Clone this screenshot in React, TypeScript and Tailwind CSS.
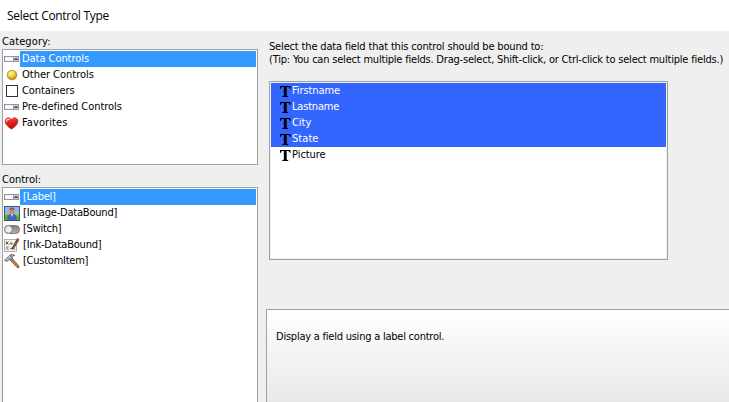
import type { ReactNode } from 'react';

const ui = "font-['DejaVu_Sans_Condensed','DejaVu_Sans',sans-serif] text-[11px] whitespace-nowrap";

function FieldIcon() {
  return (
    <svg width="16" height="16" viewBox="0 0 16 16" shapeRendering="crispEdges">
      <rect x="0" y="5" width="15" height="6" fill="#9493a2" />
      <rect x="1" y="6" width="8" height="4" fill="#f6f6fb" />
      <rect x="10" y="6" width="4" height="4" fill="#d2ccd8" />
      <path d="M11 7h2v1h1v1h-4v-1h1z" fill="#5a586a" />
    </svg>
  );
}

function BallIcon() {
  return (
    <svg width="16" height="16" viewBox="0 0 16 16">
      <defs>
        <radialGradient id="ball" cx="40%" cy="30%" r="70%">
          <stop offset="0" stopColor="#fff6a8" />
          <stop offset=".5" stopColor="#f2d143" />
          <stop offset="1" stopColor="#bd8c08" />
        </radialGradient>
      </defs>
      <circle cx="8" cy="8" r="4.800" fill="url(#ball)" stroke="#a98222" strokeWidth=".8" />
    </svg>
  );
}

function BoxIcon() {
  return (
    <svg width="16" height="16" viewBox="0 0 16 16">
      <rect x="2.5" y="2.5" width="11" height="11" fill="#fff" stroke="#333" />
    </svg>
  );
}

function HeartIcon() {
  return (
    <svg width="16" height="16" viewBox="0 0 16 16">
      <defs>
        <linearGradient id="heart" x1="0" y1="0" x2=".3" y2="1">
          <stop offset="0" stopColor="#f77b6c" />
          <stop offset=".4" stopColor="#e42a24" />
          <stop offset="1" stopColor="#b80c0c" />
        </linearGradient>
      </defs>
      <path d="M7.500 14.200C4 11.700 1.100 9.300 1.100 6.200c0-3.800 4.800-4.600 6.400-1.600 1.600-3 6.400-2.200 6.400 1.600 0 3.100-2.900 5.500-6.400 8z" fill="url(#heart)" stroke="#b5221d" strokeWidth=".6" />
      <path d="M2.700 6c.1-1.500 1.300-2 2.600-1.600" fill="none" stroke="#ffc9bd" strokeWidth="1.200" strokeLinecap="round" />
    </svg>
  );
}

function PersonIcon() {
  return (
    <svg width="16" height="16" viewBox="0 0 16 16">
      <rect x=".5" y="1.500" width="15" height="14" fill="#8fb6ee" stroke="#44546c" />
      <path d="M1 9.500h14V15H1z" fill="#57b02c" />
      <path d="M1 8l2-1.500L5 10H1zM11 7l4 1v2.500h-4z" fill="#8fcb86" />
      <path d="M3.200 15c0-4.500 1.800-6.200 4.800-6.200s4.800 1.700 4.800 6.200z" fill="#3f69b8" />
      <path d="M6.800 8.800h2.400L8 12z" fill="#e6ecf8" />
      <ellipse cx="8" cy="5.900" rx="2.500" ry="3" fill="#c98b6c" />
      <path d="M5.400 5.400c0-3.800 5.200-3.800 5.200 0L9.500 4.600h-3z" fill="#8d5238" />
    </svg>
  );
}

function SwitchIcon() {
  return (
    <svg width="16" height="16" viewBox="0 0 16 16">
      <defs>
        <linearGradient id="track" x1="0" y1="0" x2="0" y2="1">
          <stop offset="0" stopColor="#7e7e80" />
          <stop offset="1" stopColor="#b4b4b8" />
        </linearGradient>
      </defs>
      <rect x=".5" y="4.500" width="15" height="8" rx="4" fill="url(#track)" stroke="#7a7a7e" />
      <circle cx="4.500" cy="8.500" r="3.800" fill="#ececee" stroke="#858589" strokeWidth=".9" />
    </svg>
  );
}

function InkIcon() {
  return (
    <svg width="16" height="16" viewBox="0 0 16 16">
      <rect x=".5" y="2.500" width="12" height="12" fill="#f3f2ec" stroke="#b2afa6" />
      <path d="M2.500 7.500v-3m0 2 2-2M3 6l1.500 1.500M5.500 7c1-2 2-1 1.500.3M8 5.500v2M4.500 10c-2-.8-3 2.500 0 2.500M6 12c1-2 1.500.5 2.500-1M9.500 12h1.500" fill="none" stroke="#494949" strokeWidth=".9" />
      <path d="M8.300 10.800 12.800 2.600l1.700 1-4.800 7.700-1.700 1z" fill="#a0683a" stroke="#4a3020" strokeWidth=".8" />
      <path d="m12.700 2.200.7-1.200 2 1.200-.8 1.300z" fill="#b8402c" />
    </svg>
  );
}

function HammerIcon() {
  return (
    <svg width="16" height="16" viewBox="0 0 16 16">
      <path d="m5.700 6.500 1.900-1.700 7.400 8.300c.5 1.500-.9 2.300-1.900 1.400z" fill="#b8814a" stroke="#6e4826" strokeWidth=".7" />
      <path d="m.5 7.200 5.200-4.900c1.500-1.200 3.500-1.200 5.300.3-1.500-.1-2.500.5-3 1.500l.6 1-2.300 2.200-1.200-.9-2.200 2.200z" fill="#99a1a1" stroke="#545b5b" strokeWidth=".8" />
      <path d="M1.700 7.200 6.100 3" stroke="#e6eded" strokeWidth=".8" />
    </svg>
  );
}

function ListRow({ icon, text, selected, indent, tracking }: { icon: ReactNode; text: string; selected?: boolean; indent: string; tracking: string }) {
  return (
    <div className="flex h-4">
      <div className="w-[17px] shrink-0 pl-px">{icon}</div>
      <div className={`flex-1 leading-[15px] ${indent} ${selected ? 'bg-[#3399ff] text-white' : ''}`}>
        <span className={tracking}>{text}</span>
      </div>
    </div>
  );
}

function FieldRow({ text, selected, tracking }: { text: string; selected?: boolean; tracking: string }) {
  return (
    <div className={`flex h-4 pl-[9px] leading-[15px] ${selected ? 'bg-[#3366ff] text-white' : ''}`}>
      <svg className="mr-px shrink-0" width="11" height="16" viewBox="0 0 11 16">
        <path d="M0 3h10.500v3h-.7c-.3-1.500-1-2-2.500-2H6.700v8c0 .8.300 1 1.500 1v1H2.300v-1c1.200 0 1.500-.2 1.500-1V4h-.6c-1.500 0-2.200.5-2.500 2H0z" fill="#000" />
      </svg>
      <span className={tracking}>{text}</span>
    </div>
  );
}

export default function App() {
  return (
    <div className={`flex h-[402px] w-[729px] flex-col overflow-hidden bg-[#efefef] text-black ${ui}`}>
      <header className="h-[31px] shrink-0 bg-white pl-[7px] pt-[7px] font-['Open_Sans','Noto_Sans',sans-serif] text-[12px] leading-[18px]">
        <span className="tracking-[-0.3px]">Select Control Type</span>
      </header>
      <div className="flex min-h-0 flex-1">
        <div className="flex w-[258px] shrink-0 flex-col pl-[2px]">
          <div className="h-[18px] shrink-0 pt-[4px] leading-[14px]"><span className="tracking-[0.1px]">Category:</span></div>
          <div className="h-[116px] shrink-0 border border-[#a0a0a0] bg-white pt-px pr-px">
            <ListRow icon={<FieldIcon />} text="Data Controls" selected indent="pl-[2px]" tracking="tracking-[-0.05px]" />
            <ListRow icon={<BallIcon />} text="Other Controls" indent="pl-[2px]" tracking="tracking-[-0.02px]" />
            <ListRow icon={<BoxIcon />} text="Containers" indent="pl-[2px]" tracking="tracking-[-0.1px]" />
            <ListRow icon={<FieldIcon />} text="Pre-defined Controls" indent="pl-[2px]" tracking="tracking-[-0.03px]" />
            <ListRow icon={<HeartIcon />} text="Favorites" indent="pl-[2px]" tracking="tracking-[0.1px]" />
          </div>
          <div className="h-[22px] shrink-0 pt-[8px] leading-[14px]"><span className="tracking-[0px]">Control:</span></div>
          <div className="min-h-0 flex-1 border border-b-0 border-[#a0a0a0] bg-white pt-px pr-px">
            <ListRow icon={<FieldIcon />} text="[Label]" selected indent="pl-[3px]" tracking="tracking-[-0.25px]" />
            <ListRow icon={<PersonIcon />} text="[Image-DataBound]" indent="pl-[3px]" tracking="tracking-[-0.2px]" />
            <ListRow icon={<SwitchIcon />} text="[Switch]" indent="pl-[3px]" tracking="tracking-[-0.25px]" />
            <ListRow icon={<InkIcon />} text="[Ink-DataBound]" indent="pl-[3px]" tracking="tracking-[-0.2px]" />
            <ListRow icon={<HammerIcon />} text="[CustomItem]" indent="pl-[3px]" tracking="tracking-[-0.25px]" />
          </div>
        </div>
        <div className="flex min-w-0 flex-1 flex-col pl-2">
          <div className="h-[50px] shrink-0 pl-[3px] pt-[9px] leading-[13px]">
            <div><span className="tracking-[-0.16px]">Select the data field that this control should be bound to:</span></div>
            <div><span className="tracking-[-0.2px]">(Tip: You can select multiple fields. Drag-select, Shift-click, or Ctrl-click to select multiple fields.)</span></div>
          </div>
          <div className="ml-[3px] h-[179px] w-[399px] shrink-0 border border-[#a0a0a0] bg-[#efefef] p-px">
            <div className="h-full bg-white">
              <FieldRow text="Firstname" selected tracking="tracking-[-0.1px]" />
              <FieldRow text="Lastname" selected tracking="tracking-[-0.2px]" />
              <FieldRow text="City" selected tracking="tracking-[-0.05px]" />
              <FieldRow text="State" selected tracking="tracking-[0.05px]" />
              <FieldRow text="Picture" tracking="tracking-[-0.05px]" />
            </div>
          </div>
          <div className="mt-[49px] min-h-0 flex-1 border-t border-l border-[#a0a0a0] bg-linear-to-b from-white to-[#e8e8e8] pt-5 pl-[9px] leading-[14px]">
            <span className="tracking-[-0.23px]">Display a field using a label control.</span>
          </div>
        </div>
      </div>
    </div>
  );
}
